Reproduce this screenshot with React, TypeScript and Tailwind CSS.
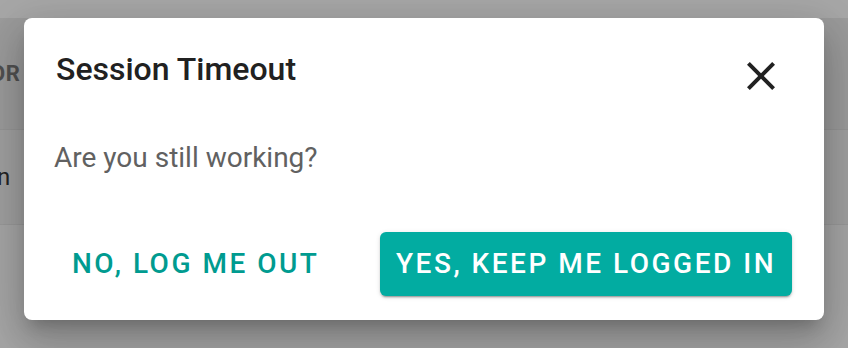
import { useState } from "react";

const font = { fontFamily: "Roboto, 'Liberation Sans', sans-serif" };

function CloseIcon() {
  return (
    <svg width="48" height="48" viewBox="0 0 24 24" fill="#212121">
      <path d="M19 6.41 17.59 5 12 10.59 6.41 5 5 6.41 10.59 12 5 17.59 6.41 19 12 13.41 17.59 19 19 17.59 13.41 12z" />
    </svg>
  );
}

export default function App() {
  const [open, setOpen] = useState(true);

  return (
    <div className="relative w-[848px] h-[348px] overflow-hidden bg-[#a6a6a6]" style={font}>
      {/* page behind the overlay */}
      <div className="flex flex-col">
        <div className="h-[18px] bg-[#a7a7a7]" />
        <div className="h-[112px] bg-[#9b9b9b] border-b border-[#959595] flex items-center">
          <span className="-ml-[10px] text-[22px] font-bold text-[#505050] tracking-wide">OR</span>
        </div>
        <div className="h-[95px] bg-[#a0a0a0] border-b border-[#999] flex items-center">
          <span className="-ml-[3px] text-[24px] text-[#222]">n</span>
        </div>
        <div className="flex-1 bg-[#a3a3a3]" />
      </div>

      {/* Session dialog */}
      {open && (
        <div className="absolute left-[24px] top-[18px] w-[800px] h-[302px] bg-white rounded-[8px] shadow-[0_11px_15px_-7px_rgba(0,0,0,0.2),0_24px_38px_3px_rgba(0,0,0,0.14),0_9px_46px_8px_rgba(0,0,0,0.12)] flex flex-col">
          <div className="flex items-start pl-8 pr-[39px] pt-[34px]">
            <h2 className="-mt-[1px] text-[32px] leading-[36px] font-medium text-[#212121]">Session Timeout</h2>
            <button className="ml-auto" onClick={() => setOpen(false)} aria-label="close">
              <CloseIcon />
            </button>
          </div>
          <p className="mt-[42px] pl-[30px] text-[28px] leading-[32px] text-[#616161]">Are you still working?</p>
          <div className="mt-auto mb-6 flex items-center justify-between pl-[32px] pr-[32px]">
            <button className="h-16 px-4 rounded-[6px] text-[28px] font-medium tracking-[2.5px] text-[#009b90]">
              NO, LOG ME OUT
            </button>
            <button className="h-16 w-[412px] pl-4 rounded-[6px] bg-[#02aca1] text-[28px] font-medium tracking-[2.5px] text-white text-left shadow-[0_3px_1px_-2px_rgba(0,0,0,0.2),0_2px_2px_0_rgba(0,0,0,0.14),0_1px_5px_0_rgba(0,0,0,0.12)]">
              YES, KEEP ME LOGGED IN
            </button>
          </div>
        </div>
      )}
    </div>
  );
}
